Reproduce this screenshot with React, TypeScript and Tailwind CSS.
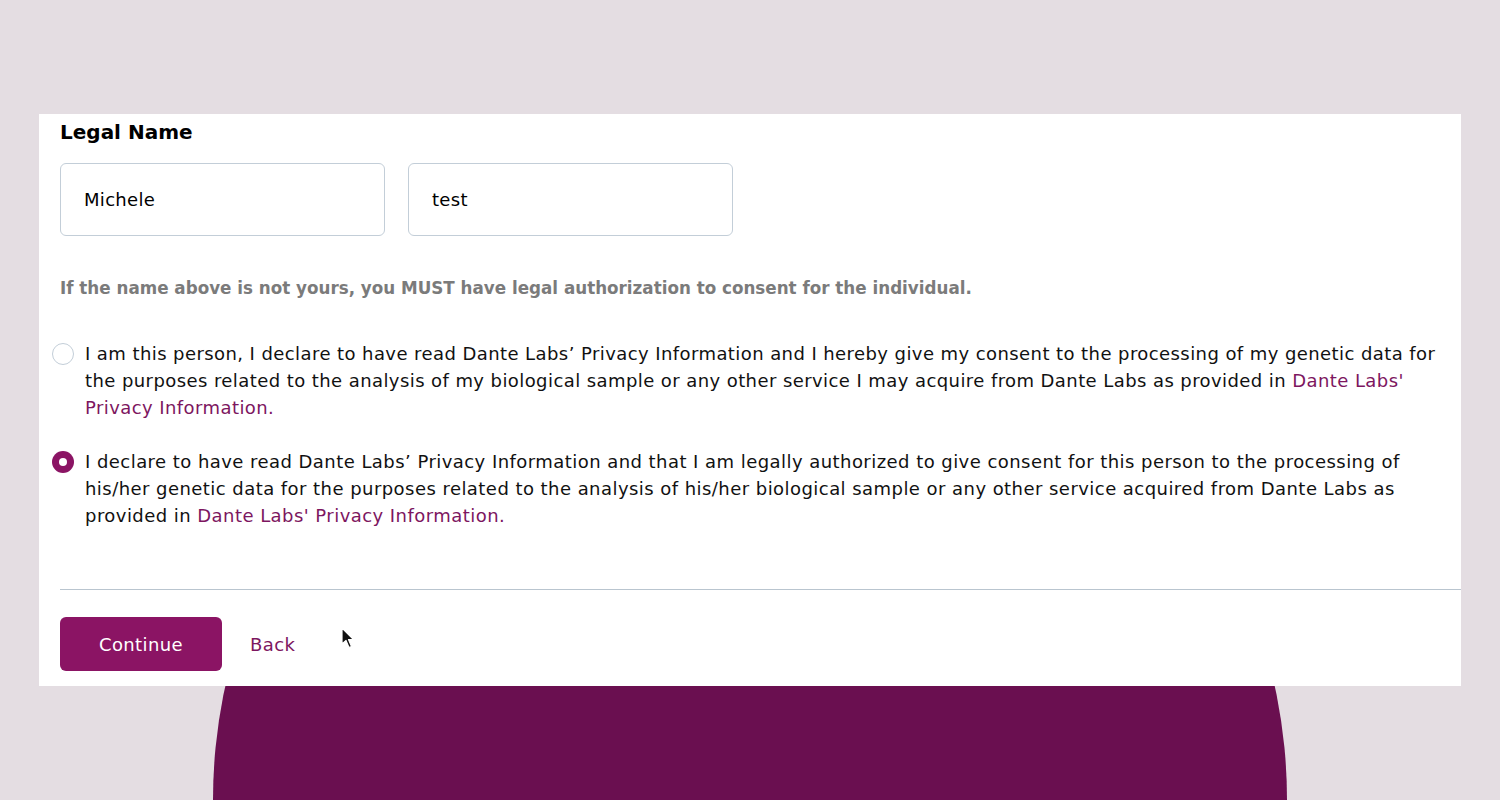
import React from "react";

const font = { fontFamily: '"DejaVu Sans", "Noto Sans", sans-serif' };

function Radio({ checked }: { checked?: boolean }) {
  return checked ? (
    <span className="mt-[3px] -ml-[8px] flex h-[22px] w-[22px] shrink-0 items-center justify-center rounded-full bg-[#8b1464]">
      <span className="h-[8px] w-[8px] rounded-full bg-white" />
    </span>
  ) : (
    <span className="mt-[3px] -ml-[8px] h-[22px] w-[22px] shrink-0 rounded-full border-[1.5px] border-[#c3ced8] bg-white" />
  );
}

export default function App() {
  return (
    <div className="relative h-[800px] overflow-hidden bg-[#e4dde2]" style={font}>
      {/* decorative circle behind the card */}
      <div className="absolute left-[213px] top-[263px] h-[1074px] w-[1074px] rounded-full bg-[#6a0f50]" />

      <div className="relative ml-[39px] mt-[114px] w-[1422px] bg-white pl-[21px] pt-[4px] pb-[15px]">
        <div className="pr-[20px]">
          <h2 className="text-[20px] leading-[28px] font-semibold text-black">Legal Name</h2>

          <div className="mt-[17px] flex gap-[23px]">
            <div className="flex h-[73px] w-[325px] items-center rounded-[6px] border border-[#c3ced8] pl-[23px] text-[18px] tracking-[0.3px] text-black">
              Michele
            </div>
            <div className="flex h-[73px] w-[325px] items-center rounded-[6px] border border-[#c3ced8] pl-[23px] text-[18px] tracking-[0.3px] text-black">
              test
            </div>
          </div>

          <p className="mt-[40px] text-[16.75px] leading-[24px] font-bold text-[#7b7b7b]">
            If the name above is not yours, you MUST have legal authorization to consent for the individual.
          </p>

          <div className="mt-[40px] flex gap-[11px]">
            <Radio />
            <p className="text-[18px] leading-[27px] tracking-[0.42px] text-[#111]">
              I am this person, I declare to have read Dante Labs’ Privacy Information and I hereby give my consent to
              the processing of my genetic data for
              <br />
              the purposes related to the analysis of my biological sample or any other service I may acquire from Dante
              Labs as provided in <span className="text-[#7d1660]">Dante Labs'</span>
              <br />
              <span className="text-[#7d1660]">Privacy Information.</span>
            </p>
          </div>

          <div className="mt-[27px] flex gap-[11px]">
            <Radio checked />
            <p className="text-[18px] leading-[27px] tracking-[0.45px] text-[#111]">
              I declare to have read Dante Labs’ Privacy Information and that I am legally authorized to give consent for
              this person to the processing of
              <br />
              his/her genetic data for the purposes related to the analysis of his/her biological sample or any other
              service acquired from Dante Labs as
              <br />
              provided in <span className="text-[#7d1660]">Dante Labs' Privacy Information.</span>
            </p>
          </div>
        </div>

        <div className="mt-[60px] h-px bg-[#b9c5cf]" />

        <div className="mt-[27px] flex items-center">
          <button className="h-[54px] w-[162px] rounded-[6px] bg-[#8b1464] text-[18px] tracking-[0.4px] text-white">
            Continue
          </button>
          <span className="ml-[28px] text-[18px] tracking-[0.4px] text-[#7d1660]">Back</span>
          <svg className="ml-[46px] mt-[-12px]" width="14" height="22" viewBox="0 0 14 22">
            <path
              d="M1 1 L1 17 L5 13.5 L8 20.5 L10.5 19.5 L7.5 12.5 L12.5 12.5 Z"
              fill="#111"
              stroke="#fff"
              strokeWidth="1.2"
              strokeLinejoin="round"
            />
          </svg>
        </div>
      </div>
    </div>
  );
}
